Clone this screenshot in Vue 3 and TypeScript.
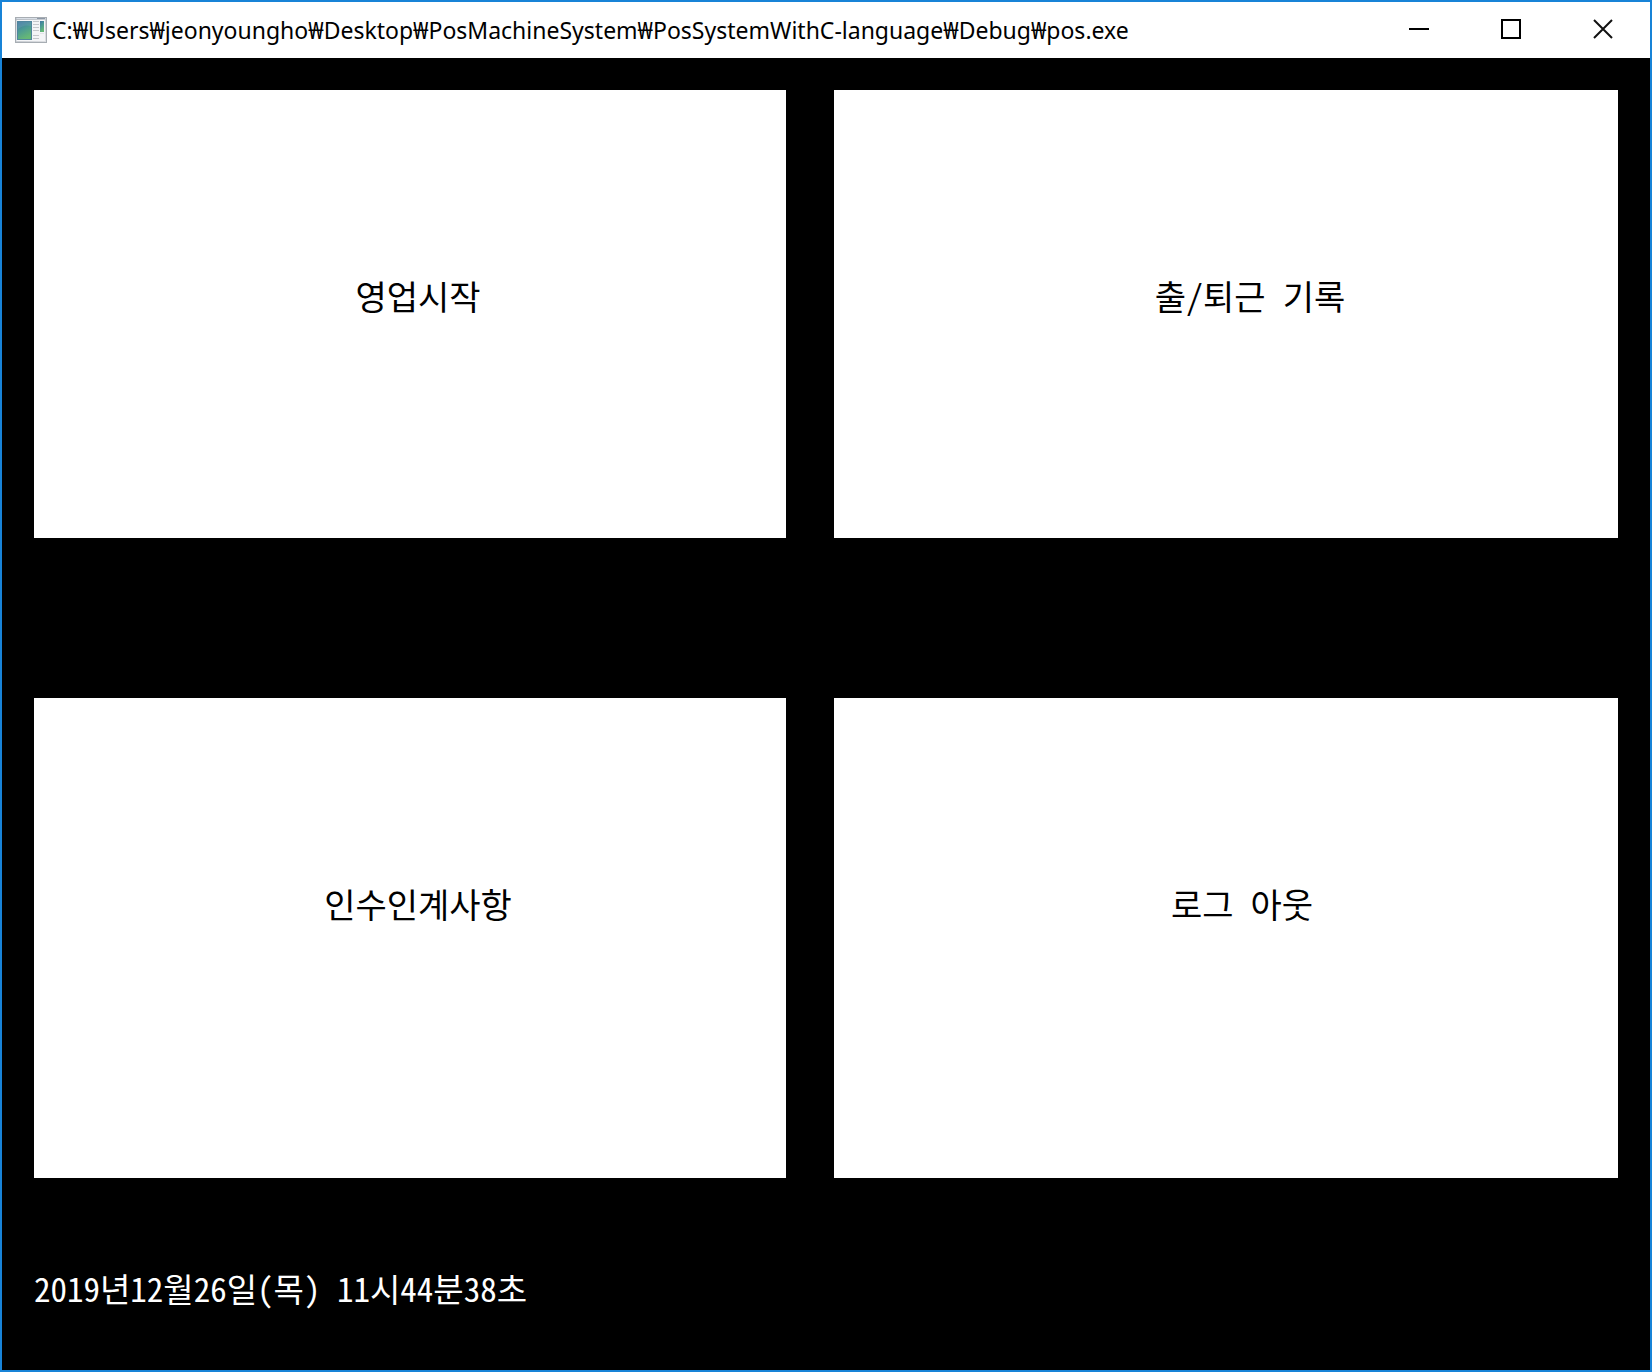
<script setup lang="ts">
interface MenuItem {
  label: string
  indent: number
}

const title = 'C:₩Users₩jeonyoungho₩Desktop₩PosMachineSystem₩PosSystemWithC-language₩Debug₩pos.exe'

const rows: MenuItem[][] = [
  [
    { label: '영업시작', indent: 16 },
    { label: '출/퇴근 기록', indent: 48 },
  ],
  [
    { label: '인수인계사항', indent: 16 },
    { label: '로그 아웃', indent: 32 },
  ],
]

const now = '2019년12월26일(목) 11시44분38초'
</script>

<template>
  <div class="window">
    <header class="titlebar">
      <svg class="app-icon" width="32" height="26" viewBox="0 0 32 26" aria-hidden="true">
        <defs>
          <linearGradient id="pane" x1="0" y1="0" x2="0.4" y2="1">
            <stop offset="0" stop-color="#3f73a3" />
            <stop offset="0.5" stop-color="#4b9a94" />
            <stop offset="1" stop-color="#66b876" />
          </linearGradient>
          <linearGradient id="frame" x1="0" y1="0" x2="1" y2="1">
            <stop offset="0" stop-color="#b4bac1" />
            <stop offset="1" stop-color="#dfe1e4" />
          </linearGradient>
        </defs>
        <rect x="0.5" y="0.5" width="31" height="25" fill="url(#frame)" stroke="#a7adb3" />
        <path d="M1.5 1.5h29" stroke="#d9dfe7" />
        <path d="M22 1.5h8" stroke="#8d98a6" />
        <rect x="1.5" y="3" width="28.5" height="21" fill="#f4f5f7" />
        <rect x="2" y="4" width="15" height="19" fill="#dfe8ee" />
        <rect x="2.5" y="4.5" width="14" height="18" fill="url(#pane)" stroke="#50869d" />
        <path d="M3 12Q9 7 16 9V5H3Z" fill="#7ba5c0" opacity="0.3" />
        <path d="M18 4.5h6M18 7.5h6M18 10.5h6M18 13.5h6M18 18.5h6M18 21.5h6" stroke="#c4c7cb" />
        <path d="M25 16.5h4" stroke="#e2e4e7" />
        <rect x="25" y="4" width="4" height="11" fill="url(#pane)" />
      </svg>
      <h1 class="title">{{ title }}</h1>
      <div class="controls">
        <button type="button" aria-label="최소화">
          <svg width="20" height="20" viewBox="0 0 20 20"><path d="M0 10h20" stroke="#000" stroke-width="2" /></svg>
        </button>
        <button type="button" aria-label="최대화">
          <svg width="20" height="20" viewBox="0 0 20 20"><path d="M1 1h18v18H1Z" fill="none" stroke="#000" stroke-width="2" /></svg>
        </button>
        <button type="button" aria-label="닫기">
          <svg width="20" height="20" viewBox="0 0 20 20"><path d="M1 1l18 18M19 1L1 19" stroke="#111" stroke-width="2" /></svg>
        </button>
      </div>
    </header>
    <main class="console">
      <nav class="menu">
        <div v-for="(row, r) in rows" :key="r" class="row">
          <button
            v-for="item in row"
            :key="item.label"
            type="button"
            class="tile"
            :style="{ paddingLeft: item.indent + 'px' }"
          >{{ item.label }}</button>
        </div>
      </nav>
      <time class="clock" datetime="2019-12-26T11:44:38">{{ now }}</time>
    </main>
  </div>
</template>

<style>
body {
  margin: 0;
}
</style>

<style scoped>
.window {
  box-sizing: border-box;
  min-height: 100vh;
  display: flex;
  flex-direction: column;
  border: 2px solid #1883d7;
  background: #000;
}

.titlebar {
  display: flex;
  align-items: center;
  height: 56px;
  padding-left: 13px;
  background: #fff;
  color: #000;
}

.app-icon {
  flex: none;
  margin-right: 5px;
}

.title {
  flex: 1;
  margin: 0;
  white-space: nowrap;
  font: 400 23px/34px "Noto Sans", "Noto Sans CJK KR", sans-serif;
}

.controls {
  display: flex;
  align-self: stretch;
}

.controls button {
  display: flex;
  align-items: center;
  justify-content: center;
  width: 92px;
  padding: 0 0 2px;
  border: 0;
  background: #fff;
}

.controls {
  padding-right: 1px;
}

.console {
  flex: 1;
  padding: 32px 32px 64px;
  font: 300 34px/32px "Noto Sans Mono CJK KR", "Noto Sans CJK KR", monospace;
}

.menu {
  display: flex;
  flex-direction: column;
  gap: 160px;
}

.row {
  display: grid;
  grid-template-columns: 47fr 49fr;
  gap: 48px;
}

.tile {
  display: flex;
  align-items: flex-start;
  justify-content: center;
  min-height: 448px;
  padding: 190px 0 0;
  border: 0;
  background: #fff;
  color: #000;
  font: inherit;
  white-space: pre;
}

.row:last-child .tile {
  min-height: 480px;
}

.clock {
  display: block;
  margin-top: 94px;
  color: #fff;
  font-size: 33px;
  white-space: pre;
}
</style>
